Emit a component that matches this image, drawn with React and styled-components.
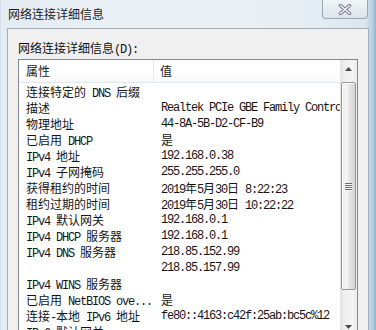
import React from "react";
import styled, { createGlobalStyle } from "styled-components";

const GlobalStyle = createGlobalStyle`
  html, body { margin: 0; padding: 0; overflow: hidden; background: #dfe8f0; }
  #root { width: 376px; height: 330px; }
`;

const Window = styled.div`
  width: 376px;
  height: 330px;
  box-sizing: border-box;
  overflow: hidden;
  display: flex;
  flex-direction: column;
  padding: 0 7px 0 7px;
  background: linear-gradient(90deg, #c4d3df 0px, #e4ecf3 1px, #eaf0f5 40%, #e6eef4 80%, #dbe7f0 97%, #b7d2e3 99%, #8fb4cb 100%);
  font-family: "Noto Sans CJK SC", sans-serif;
`;

const TitleBar = styled.div`
  height: 28px;
  flex: none;
  display: flex;
  justify-content: space-between;
  align-items: flex-start;
`;

const Title = styled.span`
  margin-top: 6px;
  margin-left: 1px;
  font-size: 12px;
  line-height: 16px;
  color: #1e1e1e;
`;

const CloseButton = styled.div`
  width: 44px;
  height: 18px;
  margin-right: 1px;
  border: 1px solid #9aa7b4;
  border-top: none;
  border-radius: 0 0 4px 4px;
  background: linear-gradient(180deg, #f1f5f8 0%, #e3eaf0 60%, #dde5ec 100%);
  display: flex;
  align-items: center;
  justify-content: center;
`;

const Client = styled.div`
  flex: 1;
  border: 1px solid #a3afbb;
  border-bottom: none;
  background: #f0f0f0;
  padding: 11px 10px 0 10px;
  display: flex;
  flex-direction: column;
`;

const GroupLabel = styled.div`
  font-size: 12px;
  line-height: 16px;
  color: #111;
  margin-bottom: 1px;
  letter-spacing: -1.2px;
  font-family: "Liberation Mono", "Noto Sans CJK SC", monospace;
`;

const ListBox = styled.div`
  height: 277px;
  flex: none;
  box-sizing: border-box;
  border: 1px solid #828790;
  background: #fff;
  display: flex;
`;

const ListContent = styled.div`
  flex: 1;
  min-width: 0;
  display: flex;
  flex-direction: column;
  overflow: hidden;
`;

const HeaderRow = styled.div`
  height: 22px;
  display: flex;
  border-bottom: 1px solid #e3e6ea;
  background: linear-gradient(180deg, #ffffff 0%, #ffffff 60%, #f7f8f9 100%);
  flex: none;
`;

const HeaderCell = styled.div`
  width: ${(p) => (p.$first ? "135px" : "auto")};
  flex: ${(p) => (p.$first ? "none" : "1")};
  padding-left: ${(p) => (p.$first ? "7px" : "6px")};
  box-sizing: border-box;
  border-right: ${(p) => (p.$first ? "1px solid #e3e6ea" : "none")};
  font-size: 12px;
  line-height: 22px;
  color: #1b1b1b;
  font-family: "Noto Sans CJK SC", sans-serif;
`;

const Rows = styled.div`
  padding-top: 1px;
  display: flex;
  flex-direction: column;
`;

const Row = styled.div`
  height: 16px;
  display: flex;
  flex: none;
`;

const Cell = styled.div`
  width: ${(p) => (p.$first ? "136px" : "auto")};
  flex: ${(p) => (p.$first ? "none" : "1")};
  padding-left: ${(p) => (p.$first ? "7px" : "6px")};
  box-sizing: border-box;
  min-width: 0;
  overflow: hidden;
  white-space: nowrap;
  font-family: "Liberation Mono", "Noto Sans CJK SC", monospace;
  font-size: 12px;
  line-height: 16px;
  letter-spacing: -1.2px;
  color: #151515;
`;

const Cjk = styled.span`
  letter-spacing: 0;
  line-height: 16px;
  font-family: "Noto Sans CJK SC", sans-serif;
`;

const ScrollBar = styled.div`
  width: 17px;
  flex: none;
  display: flex;
  flex-direction: column;
  background: linear-gradient(90deg, #e2e2e2 0%, #f0f0f0 30%, #f4f4f4 70%, #ececec 100%);
`;

const ArrowButton = styled.div`
  height: 17px;
  flex: none;
  display: flex;
  align-items: center;
  justify-content: center;
`;

const Track = styled.div`
  flex: 1;
  padding: 5px 1px 0 1px;
  display: flex;
  flex-direction: column;
`;

const Thumb = styled.div`
  height: 208px;
  box-sizing: border-box;
  border: 1px solid #979797;
  border-radius: 2px;
  background: linear-gradient(90deg, #ececec 0%, #f6f6f6 35%, #e3e3e3 60%, #d6d6d6 100%);
  box-shadow: inset 1px 1px 0 #fbfbfb;
  display: flex;
  align-items: center;
  justify-content: center;
`;

const Grip = styled.div`
  width: 7px;
  display: flex;
  flex-direction: column;
  gap: 1px;
`;

const GripLine = styled.div`
  height: 1px;
  background: #6b6b6b;
  box-shadow: 0 1px 0 #f8f8f8;
`;

const rows = [
  ["连接特定的 DNS 后缀", ""],
  ["描述", "Realtek PCIe GBE Family Controller"],
  ["物理地址", "44-8A-5B-D2-CF-B9"],
  ["已启用 DHCP", "是"],
  ["IPv4 地址", "192.168.0.38"],
  ["IPv4 子网掩码", "255.255.255.0"],
  ["获得租约的时间", "2019年5月30日 8:22:23"],
  ["租约过期的时间", "2019年5月30日 10:22:22"],
  ["IPv4 默认网关", "192.168.0.1"],
  ["IPv4 DHCP 服务器", "192.168.0.1"],
  ["IPv4 DNS 服务器", "218.85.152.99"],
  ["", "218.85.157.99"],
  ["IPv4 WINS 服务器", ""],
  ["已启用 NetBIOS ove...", "是"],
  ["连接-本地 IPv6 地址", "fe80::4163:c42f:25ab:bc5c%12"],
  ["IPv6 默认网关", ""],
];

function Mixed({ text }) {
  const parts = text.split(/([\u3000-\u9fff\uff00-\uffef]+)/);
  return parts.map((p, i) =>
    /[\u3000-\u9fff\uff00-\uffef]/.test(p) ? <Cjk key={i}>{p}</Cjk> : p
  );
}

function CloseIcon() {
  return (
    <svg width="14" height="11" viewBox="0 0 14 11">
      <path d="M2.5 1.5 L11.5 9.5 M11.5 1.5 L2.5 9.5" stroke="#6f7c89" strokeWidth="3.6" strokeLinecap="round" />
      <path d="M2.5 1.5 L11.5 9.5 M11.5 1.5 L2.5 9.5" stroke="#f2f5f8" strokeWidth="1.6" strokeLinecap="round" />
    </svg>
  );
}

function Arrow({ down }) {
  return (
    <svg width="7" height="4" viewBox="0 0 7 4">
      <path d={down ? "M0 0 H7 L3.5 4 Z" : "M0 4 H7 L3.5 0 Z"} fill="#4a4a4a" />
    </svg>
  );
}

export default function App() {
  return (
    <>
      <GlobalStyle />
      <Window>
        <TitleBar>
          <Title>网络连接详细信息</Title>
          <CloseButton>
            <CloseIcon />
          </CloseButton>
        </TitleBar>
        <Client>
          <GroupLabel>
            <Mixed text="网络连接详细信息" />(D):
          </GroupLabel>
          <ListBox>
            <ListContent>
              <HeaderRow>
                <HeaderCell $first>属性</HeaderCell>
                <HeaderCell>值</HeaderCell>
              </HeaderRow>
              <Rows>
                {rows.map(([k, v], i) => (
                  <Row key={i}>
                    <Cell $first>
                      <Mixed text={k} />
                    </Cell>
                    <Cell>
                      <Mixed text={v} />
                    </Cell>
                  </Row>
                ))}
              </Rows>
            </ListContent>
            <ScrollBar>
              <ArrowButton>
                <Arrow />
              </ArrowButton>
              <Track>
                <Thumb>
                  <Grip>
                    <GripLine />
                    <GripLine />
                    <GripLine />
                    <GripLine />
                  </Grip>
                </Thumb>
              </Track>
              <ArrowButton>
                <Arrow down />
              </ArrowButton>
            </ScrollBar>
          </ListBox>
        </Client>
      </Window>
    </>
  );
}
